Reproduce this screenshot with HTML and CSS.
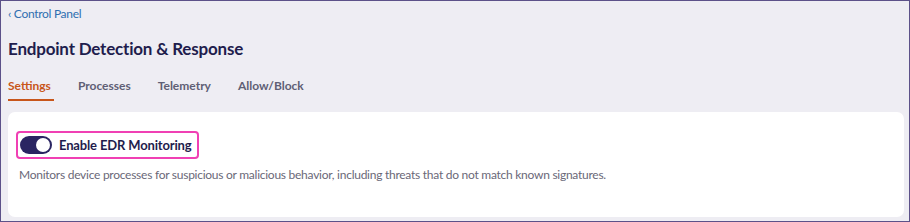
FILE: index.html
```html
<!DOCTYPE html>
<html lang="en">
<head>
<meta charset="utf-8">
<link rel="stylesheet" href="styles.css">
<title>Endpoint Detection &amp; Response</title>
</head>
<body>
<div class="frame">
  <a class="crumb" href="#">‹ Control Panel</a>
  <h1 class="title">Endpoint Detection &amp; Response</h1>
  <nav class="tabs">
    <span class="tab active">Settings</span>
    <span class="tab">Processes</span>
    <span class="tab">Telemetry</span>
    <span class="tab">Allow/Block</span>
  </nav>
  <section class="card">
    <div class="toggle-row">
      <span class="switch"><span class="knob"></span></span>
      <span class="toggle-label">Enable EDR Monitoring</span>
    </div>
    <p class="desc">Monitors device processes for suspicious or malicious behavior, including threats that do not match known signatures.</p>
  </section>
</div>
</body>
</html>
```
FILE: styles.css
```css
* { box-sizing: border-box; }
html, body { margin: 0; padding: 0; }
body {
  font-family: Lato, "Noto Sans", sans-serif;
  background: #eeedf3;
}
.frame {
  width: 910px;
  height: 222px;
  border: 1px solid #5c5189;
  background: #eeedf3;
  padding: 5px 5px 4px 7px;
  display: flex;
  flex-direction: column;
}
.crumb {
  font-size: 12px;
  letter-spacing: -0.3px;
  color: #2f6fb0;
  text-decoration: none;
  line-height: 16px;
}
.title {
  margin: 16px 0 0;
  font-size: 17px;
  letter-spacing: -0.2px;
  font-weight: 700;
  color: #1f1d4d;
  line-height: 22px;
}
.tabs {
  display: flex;
  gap: 27px;
  margin-top: 18px;
}
.tab {
  position: relative;
  font-size: 12px;
  font-weight: 700;
  color: #5f5f75;
  line-height: 16px;
  padding-bottom: 7px;
}
.tab.active {
  color: #c8561a;
}
.tab.active::after {
  content: "";
  position: absolute;
  left: 0;
  bottom: 0;
  width: calc(100% + 3px);
  height: 2px;
  background: #c8561a;
}
.card {
  margin-top: 11px;
  background: #fff;
  border-radius: 7px;
  flex: 1;
  padding: 19px 11px 0 8px;
}
.toggle-row {
  display: inline-flex;
  align-items: center;
  gap: 7px;
  border: 2px solid #f040b4;
  border-radius: 4px;
  padding: 3px 5px 3px 2px;
}
.switch {
  width: 32px;
  height: 18px;
  border-radius: 9px;
  background: #2a2562;
  display: flex;
  align-items: center;
  justify-content: flex-end;
  padding: 2px;
}
.knob {
  width: 14px;
  height: 14px;
  border-radius: 50%;
  background: #fff;
}
.toggle-label {
  font-size: 13px;
  letter-spacing: -0.15px;
  font-weight: 700;
  color: #1f1d4d;
}
.desc {
  margin: 8px 0 0 3px;
  font-size: 12px;
  letter-spacing: -0.26px;
  color: #6a6878;
}
```
